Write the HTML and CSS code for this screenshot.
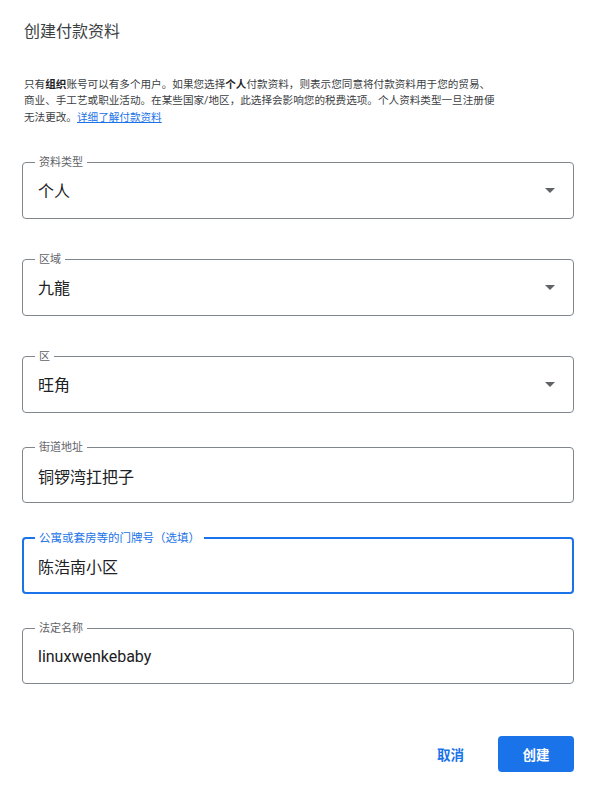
FILE: index.html
```html
<!DOCTYPE html>
<html lang="zh-CN">
  <head>
    <meta charset="utf-8">
    <title>创建付款资料</title>
    <link rel="stylesheet" href="styles.css">
  </head>
  <body>
    <div class="dialog">
      <h1>创建付款资料</h1>
      <p class="intro">只有<b>组织</b>账号可以有多个用户。如果您选择<b>个人</b>付款资料，则表示您同意将付款资料用于您的贸易、商业、手工艺或职业活动。在某些国家/地区，此选择会影响您的税费选项。个人资料类型一旦注册便无法更改。<a href="#">详细了解付款资料</a></p>

      <form class="form">
        <fieldset class="field select">
          <legend>资料类型</legend>
          <div class="control">个人<span class="arrow"></span></div>
        </fieldset>
        <fieldset class="field select">
          <legend>区域</legend>
          <div class="control">九龍<span class="arrow"></span></div>
        </fieldset>
        <fieldset class="field select last">
          <legend>区</legend>
          <div class="control">旺角<span class="arrow"></span></div>
        </fieldset>
        <fieldset class="field text">
          <legend>街道地址</legend>
          <div class="control">铜锣湾扛把子</div>
        </fieldset>
        <fieldset class="field text focused">
          <legend>公寓或套房等的门牌号（选填）</legend>
          <div class="control">陈浩南小区</div>
        </fieldset>
        <fieldset class="field text">
          <legend>法定名称</legend>
          <div class="control">linuxwenkebaby</div>
        </fieldset>
      </form>

      <div class="actions">
        <button type="button" class="btn-text">取消</button>
        <button type="button" class="btn-primary">创建</button>
      </div>
    </div>
  </body>
</html>
```

FILE: styles.css
```css
* {
  box-sizing: border-box;
  margin: 0;
  padding: 0;
}
body {
  font-family: Roboto, "Noto Sans CJK SC", sans-serif;
  background: #fff;
  color: #202124;
}
.dialog {
  width: 597px;
  padding: 20px 23px 0 22px;
}
h1 {
  font-size: 16px;
  font-weight: 400;
  line-height: 24px;
  color: #3c4043;
  padding-left: 2px;
}
.intro {
  margin-top: 32.5px;
  padding-left: 2px;
  max-width: 477px;
  font-size: 10.6px;
  line-height: 16.5px;
  color: #3c4043;
}
.intro b {
  font-weight: 700;
  color: #202124;
}
.intro a {
  color: #1a73e8;
  text-decoration: underline;
}
.form {
  margin-top: 30.5px;
}
.field {
  border: 1px solid #80868b;
  border-radius: 4px;
  min-width: 0;
}
.field.select {
  margin-bottom: 35px;
}
.field.select.last {
  margin-bottom: 29px;
}
.field.text {
  margin-bottom: 29px;
}
.field legend {
  margin-left: 12px;
  padding: 0 4px;
  font-size: 11px;
  line-height: 12px;
  color: #5f6368;
}
.control {
  position: relative;
  display: flex;
  align-items: center;
  height: 49px;
  padding: 0 15px 6px;
  font-size: 16px;
  color: #202124;
}
.field.text .control {
  height: 48px;
  padding-bottom: 4px;
}
.field.focused {
  border: 2px solid #1a73e8;
}
.field.focused legend {
  margin-left: 11px;
  color: #1a73e8;
  font-size: 11.5px;
}
.field.focused .control {
  height: 48px;
  padding-left: 14px;
}
.arrow {
  position: absolute;
  right: 18px;
  top: 19px;
  border-left: 5px solid transparent;
  border-right: 5px solid transparent;
  border-top: 5px solid #5f6368;
}
.actions {
  display: flex;
  justify-content: flex-end;
  align-items: center;
  gap: 16px;
  margin-top: 52px;
}
.actions button {
  font-family: inherit;
  font-size: 13.5px;
  font-weight: 700;
  height: 36px;
  border-radius: 4px;
  border: none;
  cursor: pointer;
}
.btn-text {
  background: transparent;
  color: #1a73e8;
  padding: 0 18px;
}
.btn-primary {
  background: #1a73e8;
  color: #fff;
  width: 76px;
}
```
